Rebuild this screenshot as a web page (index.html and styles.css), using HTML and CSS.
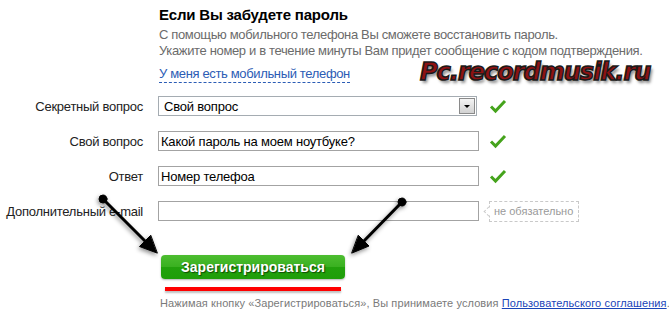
FILE: index.html
```html
<!DOCTYPE html>
<html lang="ru">
<head>
    <meta charset="UTF-8">
    <title>Если Вы забудете пароль</title>
    <link rel="stylesheet" href="styles.css">
</head>
<body>
    <div class="page">
        <div class="intro">
            <h1 class="title">Если Вы забудете пароль</h1>
            <p class="hint">С помощью мобильного телефона Вы сможете восстановить пароль.<br>Укажите номер и в течение минуты Вам придет сообщение с кодом подтверждения.</p>
            <a class="phone-link" href="#">У меня есть мобильный телефон</a>
        </div>

        <form class="form">
            <div class="row">
                <label class="label">Секретный вопрос</label>
                <div class="field">
                    <div class="select">
                        <span>Свой вопрос</span>
                        <span class="select-btn"></span>
                    </div>
                </div>
                <svg class="check" width="18" height="15" viewBox="0 0 18 15"><path d="M2 7.5 L6.5 12 L16 2" fill="none" stroke="#45a31c" stroke-width="3"/></svg>
            </div>
            <div class="row">
                <label class="label">Свой вопрос</label>
                <div class="field"><input class="input" type="text" value="Какой пароль на моем ноутбуке?"></div>
                <svg class="check" width="18" height="15" viewBox="0 0 18 15"><path d="M2 7.5 L6.5 12 L16 2" fill="none" stroke="#45a31c" stroke-width="3"/></svg>
            </div>
            <div class="row">
                <label class="label">Ответ</label>
                <div class="field"><input class="input" type="text" value="Номер телефоа"></div>
                <svg class="check" width="18" height="15" viewBox="0 0 18 15"><path d="M2 7.5 L6.5 12 L16 2" fill="none" stroke="#45a31c" stroke-width="3"/></svg>
            </div>
            <div class="row">
                <label class="label">Дополнительный e-mail</label>
                <div class="field"><input class="input" type="text" value=""></div>
                <span class="tip">не обязательно</span>
            </div>
        </form>

        <div class="submit">
            <button type="button" class="submit-btn">Зарегистрироваться</button>
            <div class="red-line"></div>
            <p class="terms">Нажимая кнопку «Зарегистрироваться», Вы принимаете условия <a href="#">Пользовательского соглашения</a>.</p>
        </div>

        <div class="watermark">Pc.recordmusik.ru</div>

        <svg class="arrows" width="669" height="322" viewBox="0 0 669 322">
            <g class="arrow">
                <circle cx="103" cy="199" r="4"/>
                <line x1="103" y1="199" x2="147" y2="243"/>
                <polygon points="157,253 139.5,246.5 150.5,235.5"/>
            </g>
            <g class="arrow">
                <circle cx="402" cy="202" r="4"/>
                <line x1="402" y1="202" x2="362" y2="243"/>
                <polygon points="352,253 369,246 358.5,235.5"/>
            </g>
        </svg>
    </div>
</body>
</html>
```

FILE: styles.css
```css
body {
    margin: 0;
    background: #fff;
    font-family: Arial, 'Liberation Sans', sans-serif;
}
.page {
    position: relative;
    width: 669px;
    height: 322px;
    overflow: hidden;
}
.intro {
    padding: 5px 0 0 159px;
}
.title {
    margin: 0;
    font-size: 15px;
    line-height: 20px;
    font-weight: bold;
    letter-spacing: -0.2px;
    color: #000;
}
.hint {
    margin: 2px 0 0;
    font-size: 13px;
    line-height: 16px;
    letter-spacing: -0.35px;
    color: #6b6b6b;
    white-space: nowrap;
}
.phone-link {
    display: inline-block;
    margin-top: 6px;
    font-size: 13px;
    line-height: 17px;
    letter-spacing: -0.35px;
    color: #2b5cb5;
    text-decoration: none;
    border-bottom: 1px dashed #2b5cb5;
}
.form {
    margin-top: 13px;
    display: flex;
    flex-direction: column;
    gap: 15px;
}
.row {
    display: flex;
    align-items: center;
    height: 20px;
}
.label {
    width: 143px;
    margin-right: 15px;
    text-align: right;
    font-size: 13px;
    letter-spacing: -0.25px;
    color: #222;
    white-space: nowrap;
}
.field {
    width: 321px;
}
.select {
    width: 319px;
    height: 20px;
    box-sizing: border-box;
    border: 1px solid #a5acb2;
    display: flex;
    align-items: center;
    justify-content: space-between;
    padding-left: 5px;
    font-size: 13px;
    letter-spacing: -0.2px;
    color: #000;
}
.select-btn {
    position: relative;
    width: 16px;
    height: 16px;
    margin-right: 1px;
    box-sizing: border-box;
    border: 1px solid #8a8a8a;
    background: linear-gradient(#f4f4f4, #d2d2d2);
}
.select-btn::after {
    content: "";
    position: absolute;
    left: 4px;
    top: 6px;
    border-left: 3px solid transparent;
    border-right: 3px solid transparent;
    border-top: 3px solid #000;
}
.input {
    display: block;
    width: 321px;
    height: 20px;
    box-sizing: border-box;
    margin: 0;
    padding: 0 2px;
    border: 1px solid #a3a3a3;
    font-family: Arial, 'Liberation Sans', sans-serif;
    font-size: 13px;
    letter-spacing: -0.2px;
    color: #000;
    outline: none;
}
.check {
    margin-left: 10px;
}
.tip {
    position: relative;
    margin-left: 10px;
    height: 21px;
    box-sizing: border-box;
    padding: 0 5px 0 4px;
    border: 1px dashed #c9c9c9;
    font-size: 11px;
    line-height: 19px;
    color: #9a9a9a;
}
.tip::before {
    content: "";
    position: absolute;
    left: -5px;
    top: 6px;
    width: 6px;
    height: 6px;
    border-left: 1px dashed #c9c9c9;
    border-bottom: 1px dashed #c9c9c9;
    background: #fff;
    transform: rotate(45deg);
}
.submit {
    margin-top: 34px;
    padding-left: 161px;
}
.submit-btn {
    display: block;
    width: 184px;
    height: 24px;
    border: none;
    border-radius: 4px;
    padding: 0;
    background: linear-gradient(#4dbd30 0%, #3ab121 48%, #22a10c 52%, #1f9e09 100%);
    box-shadow: 0 1px 2px rgba(0,0,0,0.3);
    font-family: Arial, 'Liberation Sans', sans-serif;
    font-size: 14px;
    font-weight: bold;
    color: #fff;
    text-shadow: 1px 1px 1px #0f4a05;
}
.red-line {
    width: 176px;
    height: 4px;
    margin: 8px 0 0 4px;
    background: #ff0000;
    box-shadow: 0 2px 2px rgba(0,0,0,0.25);
}
.terms {
    margin: 5px 0 0 -1px;
    font-size: 11px;
    line-height: 15px;
    letter-spacing: 0.1px;
    color: #7a7a7a;
    white-space: nowrap;
}
.terms a {
    color: #1a44b8;
}
.watermark {
    position: absolute;
    left: 420px;
    top: 58px;
    font-family: 'DejaVu Sans', sans-serif;
    font-size: 24px;
    font-weight: bold;
    font-style: italic;
    letter-spacing: -1px;
    color: #8e1212;
    -webkit-text-stroke: 1.5px #1a1a1a;
    text-shadow: 2px 3px 3px rgba(0,0,0,0.45);
}
.arrows {
    position: absolute;
    left: 0;
    top: 0;
    pointer-events: none;
}
.arrow {
    fill: #000;
    stroke: #000;
    stroke-width: 3;
    stroke-linecap: round;
    filter: drop-shadow(-1px 2px 2px rgba(0,0,0,0.45));
}
.arrow polygon,
.arrow circle {
    stroke-width: 1;
}
```
